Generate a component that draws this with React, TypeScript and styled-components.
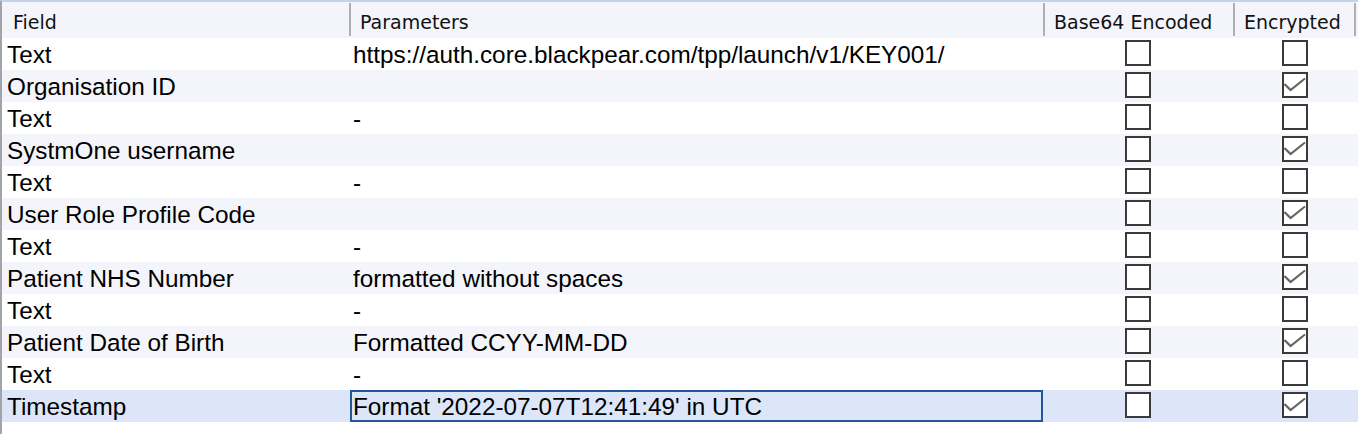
import React from "react";
import styled, { createGlobalStyle } from "styled-components";

const Global = createGlobalStyle`
  html, body { margin: 0; padding: 0; background: #ffffff; }
  body { width: 1358px; height: 434px; overflow: hidden; }
`;

const COLS = "347px 694px 190px 123px";

const Table = styled.div`
  width: 1356px;
  border-left: 2px solid #a3a3ab;
  border-top: 2px solid #c3d1ea;
  box-sizing: content-box;
  height: 432px;
  background: #ffffff;
`;

const HeaderRow = styled.div`
  display: grid;
  grid-template-columns: ${COLS};
  height: 36px;
  background: #f4f5fa;
  align-items: start;
`;

const HeaderCell = styled.div<{ $first?: boolean; $last?: boolean }>`
  height: 33px;
  margin-top: 1px;
  box-sizing: border-box;
  padding: 6px 0 0 ${(p) => (p.$first ? 11 : 9)}px;
  border-left: ${(p) => (p.$first ? "none" : "2px solid #b0b0b4")};
  border-right: ${(p) => (p.$last ? "2px solid #b0b0b4" : "none")};
  font-family: "DejaVu Sans", sans-serif;
  font-size: 19px;
  line-height: 27px;
  color: #111111;
  white-space: nowrap;
`;

const Row = styled.div<{ $alt: boolean; $selected: boolean }>`
  display: grid;
  grid-template-columns: ${COLS};
  height: 32px;
  background: ${(p) => (p.$selected ? "#dce6f8" : p.$alt ? "#f4f5fa" : "#ffffff")};
`;

const TextCell = styled.div<{ $pad: number; $focused?: boolean }>`
  box-sizing: border-box;
  height: 32px;
  padding-top: 2px;
  padding-left: ${(p) => p.$pad}px;
  font-family: "Liberation Sans", Arial, sans-serif;
  font-size: 24.3px;
  line-height: 30px;
  color: #000000;
  white-space: nowrap;
  ${(p) =>
    p.$focused
      ? `border: 2px solid #23579a; margin-left: 1px; padding-left: 1px; padding-top: 2px; line-height: 26px;`
      : ""}
`;

const CheckCell = styled.div`
  display: flex;
  justify-content: center;
  align-items: flex-start;
  padding-top: 2px;
  height: 32px;
  box-sizing: border-box;
`;

const Box = styled.div`
  width: 26px;
  height: 26px;
  box-sizing: border-box;
  border: 2px solid #3a3a3a;
  background: #ffffff;
  position: relative;
`;

const Tick = styled.svg`
  position: absolute;
  left: -2px;
  top: -2px;
`;

const CheckBox = ({ checked }: { checked: boolean }) => (
  <Box>
    {checked && (
      <Tick width="26" height="26" viewBox="0 0 26 26">
        <path
          d="M2.5 12 L8.5 18 L23 6.5"
          fill="none"
          stroke="#646464"
          strokeWidth="2.2"
          strokeLinejoin="miter"
        />
      </Tick>
    )}
  </Box>
);

type Item = { field: string; param: string; b64: boolean; enc: boolean };

const rows: Item[] = [
  { field: "Text", param: "https://auth.core.blackpear.com/tpp/launch/v1/KEY001/", b64: false, enc: false },
  { field: "Organisation ID", param: "", b64: false, enc: true },
  { field: "Text", param: "-", b64: false, enc: false },
  { field: "SystmOne username", param: "", b64: false, enc: true },
  { field: "Text", param: "-", b64: false, enc: false },
  { field: "User Role Profile Code", param: "", b64: false, enc: true },
  { field: "Text", param: "-", b64: false, enc: false },
  { field: "Patient NHS Number", param: "formatted without spaces", b64: false, enc: true },
  { field: "Text", param: "-", b64: false, enc: false },
  { field: "Patient Date of Birth", param: "Formatted CCYY-MM-DD", b64: false, enc: true },
  { field: "Text", param: "-", b64: false, enc: false },
  { field: "Timestamp", param: "Format '2022-07-07T12:41:49' in UTC", b64: false, enc: true },
];

export default function App() {
  const selected = rows.length - 1;
  return (
    <>
      <Global />
      <Table>
        <HeaderRow>
          <HeaderCell $first>Field</HeaderCell>
          <HeaderCell>Parameters</HeaderCell>
          <HeaderCell>Base64 Encoded</HeaderCell>
          <HeaderCell $last>Encrypted</HeaderCell>
        </HeaderRow>
        {rows.map((r, i) => (
          <Row key={i} $alt={i % 2 === 1} $selected={i === selected}>
            <TextCell $pad={5}>{r.field}</TextCell>
            <TextCell $pad={4} $focused={i === selected}>
              {r.param}
            </TextCell>
            <CheckCell>
              <CheckBox checked={r.b64} />
            </CheckCell>
            <CheckCell>
              <CheckBox checked={r.enc} />
            </CheckCell>
          </Row>
        ))}
      </Table>
    </>
  );
}
